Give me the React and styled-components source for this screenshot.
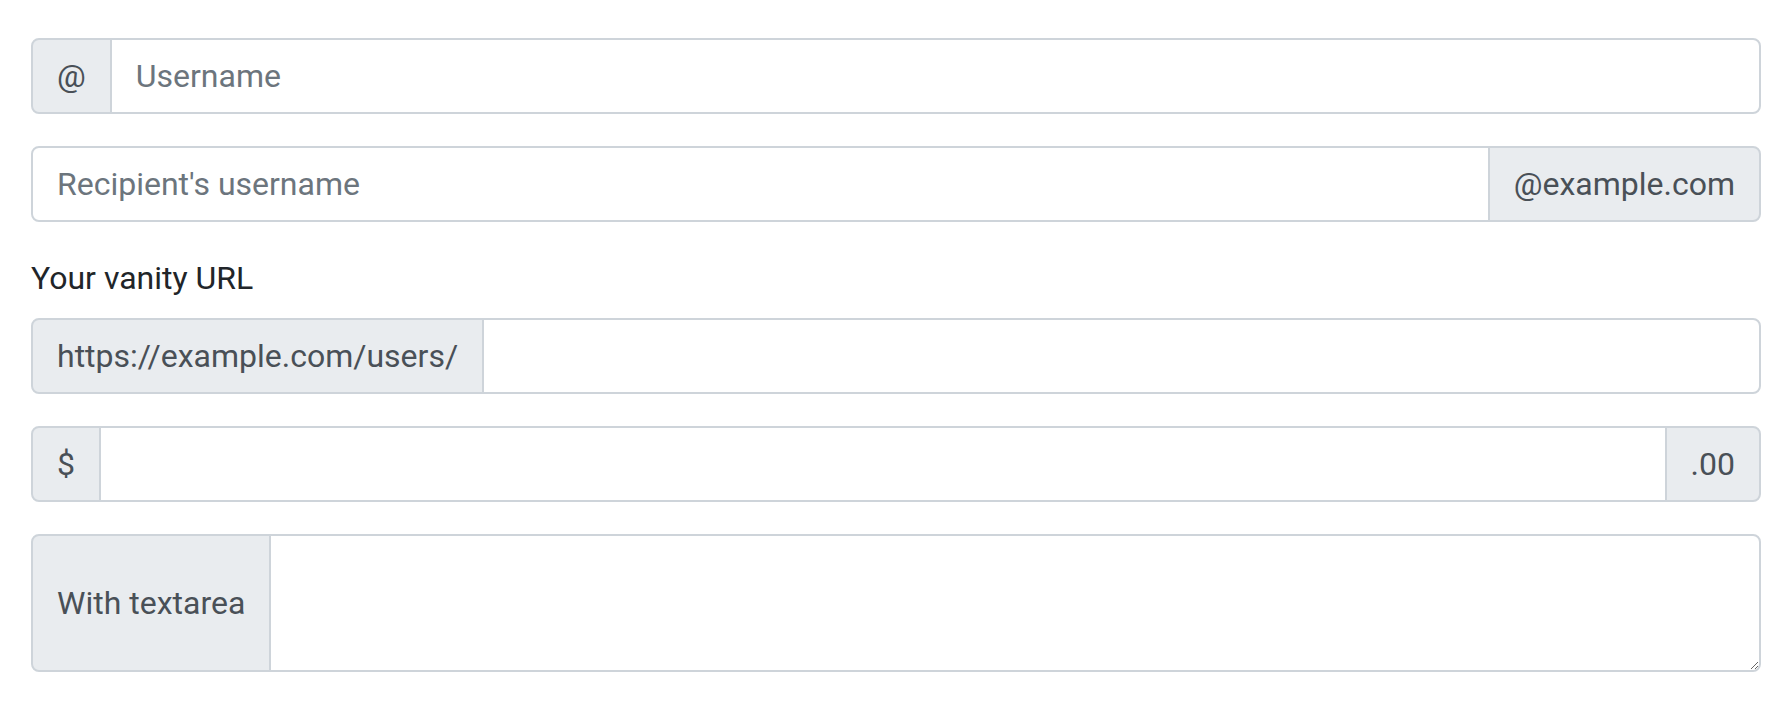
import React from 'react';
import styled, { createGlobalStyle } from 'styled-components';

const GlobalStyle = createGlobalStyle`
  html, body {
    margin: 0;
    padding: 0;
    background: #fff;
  }
  body {
    font-family: Roboto, "Liberation Sans", Arial, sans-serif;
    font-size: 32px;
    line-height: 1.5;
    color: #212529;
  }
  * {
    box-sizing: border-box;
  }
`;

const Page = styled.div`
  padding: 38px 27px 0 31px;
`;

const Group = styled.div`
  display: flex;
  align-items: stretch;
  width: 100%;
  margin-bottom: 32px;
`;

const Label = styled.label`
  display: block;
  margin-bottom: 16px;
  color: #212529;
`;

const Addon = styled.span`
  display: flex;
  align-items: center;
  padding: 0 24px;
  font-size: 32px;
  line-height: 1.5;
  color: #495057;
  white-space: nowrap;
  background: #e9ecef;
  border: 2px solid #ced4da;
  border-radius: ${(p) => (p.$end ? '0 8px 8px 0' : '8px 0 0 8px')};
  margin-left: ${(p) => (p.$end ? '-2px' : '0')};
`;

const Input = styled.input`
  flex: 1 1 auto;
  min-width: 0;
  height: 76px;
  padding: 12px 24px;
  font-family: inherit;
  font-size: 32px;
  line-height: 1.5;
  color: #495057;
  background: #fff;
  border: 2px solid #ced4da;
  margin-left: ${(p) => (p.$first ? '0' : '-2px')};
  border-radius: ${(p) =>
    p.$first ? '8px 0 0 8px' : p.$last ? '0 8px 8px 0' : '0'};
  outline: none;

  &::placeholder {
    color: #6c757d;
    opacity: 1;
  }
`;

const TextArea = styled.textarea`
  flex: 1 1 auto;
  min-width: 0;
  height: 138px;
  padding: 12px 24px;
  font-family: inherit;
  font-size: 32px;
  line-height: 1.5;
  color: #495057;
  background: #fff;
  border: 2px solid #ced4da;
  margin-left: -2px;
  border-radius: 0 8px 8px 0;
  outline: none;
`;

export default function App() {
  return (
    <>
      <GlobalStyle />
      <Page>
        <Group>
          <Addon>@</Addon>
          <Input $last placeholder="Username" />
        </Group>

        <Group>
          <Input $first placeholder="Recipient's username" />
          <Addon $end>@example.com</Addon>
        </Group>

        <Label htmlFor="basic-url">Your vanity URL</Label>
        <Group>
          <Addon>https://example.com/users/</Addon>
          <Input id="basic-url" $last />
        </Group>

        <Group>
          <Addon>$</Addon>
          <Input />
          <Addon $end>.00</Addon>
        </Group>

        <Group>
          <Addon>With textarea</Addon>
          <TextArea />
        </Group>
      </Page>
    </>
  );
}
